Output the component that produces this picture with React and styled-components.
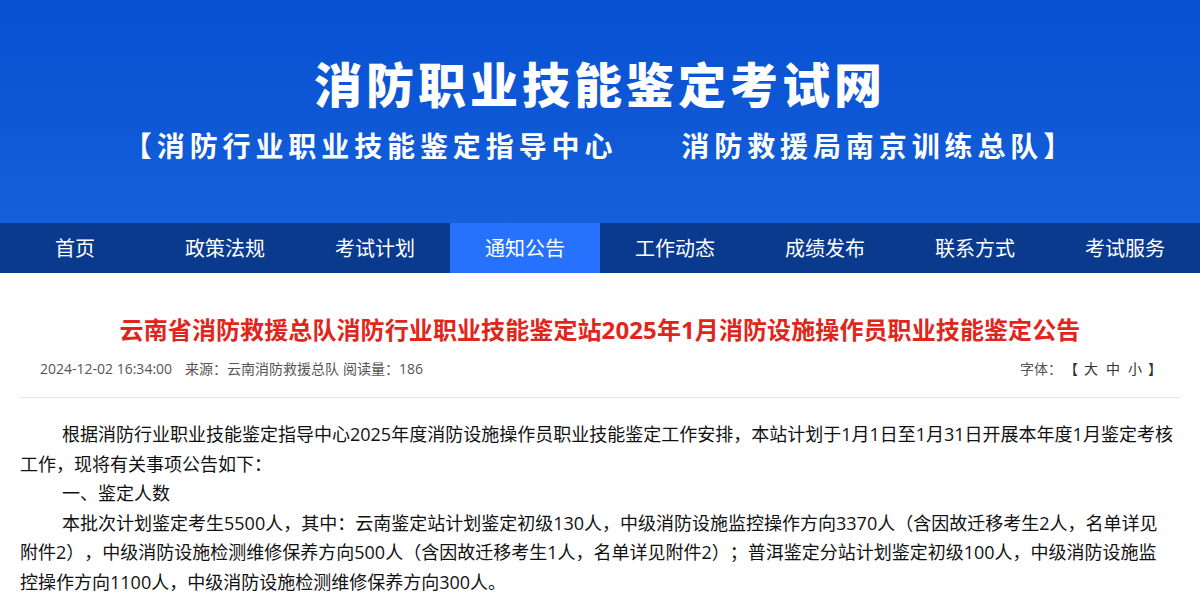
import React from 'react';
import styled, { createGlobalStyle } from 'styled-components';

const GlobalStyle = createGlobalStyle`
  html, body {
    margin: 0;
    padding: 0;
    background: #fff;
  }
  body {
    font-family: "Open Sans", "Noto Sans CJK SC", sans-serif;
    text-spacing-trim: space-all;
  }
`;

const navItems = ['首页', '政策法规', '考试计划', '通知公告', '工作动态', '成绩发布', '联系方式', '考试服务'];

const App = () => {
    return (
        <>
        <GlobalStyle />
        <Banner>
            <SiteName>消防职业技能鉴定考试网</SiteName>
            <SubName>【消防行业职业技能鉴定指导中心<Spacer />消防救援局南京训练总队】</SubName>
        </Banner>
        <Nav>
            {navItems.map(item => (
                <NavItem key={item} href="#" $active={item === '通知公告'}>{item}</NavItem>
            ))}
        </Nav>
        <Article>
            <Title>云南省消防救援总队消防行业职业技能鉴定站2025年1月消防设施操作员职业技能鉴定公告</Title>
            <Meta>
                <div>
                    <MetaItem $gap="13px">2024-12-02 16:34:00</MetaItem>
                    <MetaItem $gap="4px">来源：云南消防救援总队</MetaItem>
                    <MetaItem>阅读量：186</MetaItem>
                </div>
                <FontSizer>
                    字体：<Bracket>【</Bracket>
                    <SizeLink>大</SizeLink>
                    <SizeLink>中</SizeLink>
                    <SizeLink>小</SizeLink>
                    <Bracket>】</Bracket>
                </FontSizer>
            </Meta>
            <Body>
                <Para>
                    根据消防行业职业技能鉴定指导中心2025年度消防设施操作员职业技能鉴定工作安排，本站计划于1月1日至1月31日开展本年度1月鉴定考核<br />
                    工作，现将有关事项公告如下：
                </Para>
                <Para>一、鉴定人数</Para>
                <Para>
                    本批次计划鉴定考生5500人，其中：云南鉴定站计划鉴定初级130人，中级消防设施监控操作方向3370人（含因故迁移考生2人，名单详见<br />
                    附件2），中级消防设施检测维修保养方向500人（含因故迁移考生1人，名单详见附件2）；普洱鉴定分站计划鉴定初级100人，中级消防设施监<br />
                    控操作方向1100人，中级消防设施检测维修保养方向300人。
                </Para>
            </Body>
        </Article>
        </>
    );
}

export default App;

const Banner = styled.header`
    height: 223px;
    box-sizing: border-box;
    padding-top: 58px;
    display: flex;
    flex-direction: column;
    align-items: center;
    background: linear-gradient(180deg, #0851d3 0%, #0e58d6 55%, #1461d9 100%);
    color: #fff;
    font-family: "Noto Sans CJK SC", sans-serif;
`;
const SiteName = styled.h1`
    margin: 0;
    font-size: 48px;
    line-height: 48px;
    font-weight: 900;
    letter-spacing: 4px;
`;
const SubName = styled.div`
    margin-top: 25px;
    font-size: 28px;
    line-height: 28px;
    font-weight: 700;
    letter-spacing: 4.9px;
    white-space: nowrap;
`;
const Spacer = styled.span`
    display: inline-block;
    width: 64px;
`;
const Nav = styled.nav`
    display: flex;
    height: 50px;
    background: #0a3a8e;
`;
const NavItem = styled.a`
    flex: 1;
    text-align: center;
    line-height: 50px;
    font-size: 20px;
    font-family: "Noto Sans CJK SC", sans-serif;
    color: #fff;
    text-decoration: none;
    background: ${p => p.$active ? '#2672fe' : 'transparent'};
`;
const Article = styled.main`
    width: 1160px;
    margin: 0 auto;
`;
const Title = styled.h2`
    margin: 0;
    padding-top: 40px;
    text-align: center;
    color: #e1251b;
    font-size: 24px;
    line-height: 34px;
    font-weight: 700;
    letter-spacing: 0.1px;
    white-space: nowrap;
`;
const Meta = styled.div`
    display: flex;
    justify-content: space-between;
    margin-top: 12px;
    padding: 0 20px 18px;
    border-bottom: 1px solid #e8e8e8;
    font-size: 14px;
    line-height: 20px;
    color: #555;
`;
const MetaItem = styled.span`
    margin-right: ${p => p.$gap || '10px'};
`;
const FontSizer = styled.div`
    margin-right: -4px;
    color: #555;
`;
const Bracket = styled.span`
    margin: 0 2px;
    color: #333;
`;
const SizeLink = styled.a`
    margin: 0 4px;
    color: #333;
    cursor: pointer;
`;
const Body = styled.div`
    padding-top: 22px;
    font-size: 18px;
    line-height: 29.6px;
    color: #111;
`;
const Para = styled.p`
    margin: 0;
    text-indent: 42px;
    white-space: nowrap;
`;
